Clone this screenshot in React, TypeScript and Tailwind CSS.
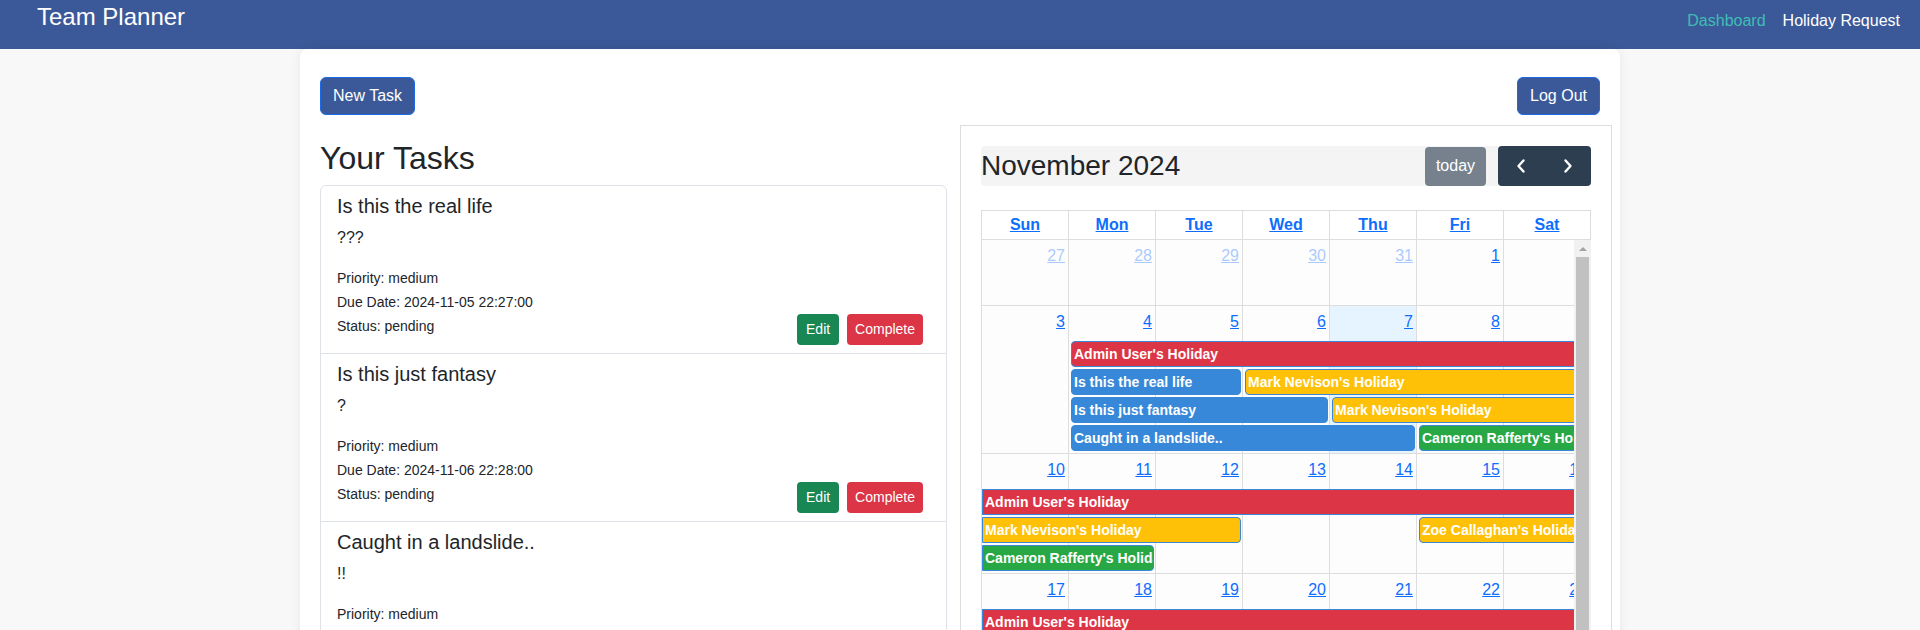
import React from 'react'

type Ev = {
    title: string
    color: 'red' | 'blue' | 'yellow' | 'green'
    col: number
    span: number
    row: number
    starts: boolean
    ends: boolean
}

type Week = {
    days: number[]
    other: number[]
    today?: number
    rows: string
    events: Ev[]
}

const colStart: Record<number, string> = {
    1: 'col-start-1',
    2: 'col-start-2',
    3: 'col-start-3',
    4: 'col-start-4',
    5: 'col-start-5',
    6: 'col-start-6',
    7: 'col-start-7',
}

const colSpan: Record<number, string> = {
    1: 'col-span-1',
    2: 'col-span-2',
    3: 'col-span-3',
    4: 'col-span-4',
    5: 'col-span-5',
    6: 'col-span-6',
    7: 'col-span-7',
}

const rowStart: Record<number, string> = {
    2: 'row-start-2',
    3: 'row-start-3',
    4: 'row-start-4',
    5: 'row-start-5',
}

const evColor = {
    red: 'bg-[#dc3545]',
    blue: 'bg-[#3788d8]',
    yellow: 'bg-[#ffc107]',
    green: 'bg-[#28a745]',
}

const weeks: Week[] = [
    { days: [27, 28, 29, 30, 31, 1, 2], other: [0, 1, 2, 3, 4], rows: 'grid-rows-[66px]', events: [] },
    {
        days: [3, 4, 5, 6, 7, 8, 9],
        other: [],
        today: 4,
        rows: 'grid-rows-[35px_28px_28px_28px_28px_1px]',
        events: [
            { title: "Admin User's Holiday", color: 'red', col: 2, span: 6, row: 2, starts: true, ends: false },
            { title: 'Is this the real life', color: 'blue', col: 2, span: 2, row: 3, starts: true, ends: true },
            { title: "Mark Nevison's Holiday", color: 'yellow', col: 4, span: 4, row: 3, starts: true, ends: false },
            { title: 'Is this just fantasy', color: 'blue', col: 2, span: 3, row: 4, starts: true, ends: true },
            { title: "Mark Nevison's Holiday", color: 'yellow', col: 5, span: 3, row: 4, starts: true, ends: false },
            { title: 'Caught in a landslide..', color: 'blue', col: 2, span: 4, row: 5, starts: true, ends: true },
            { title: "Cameron Rafferty's Holiday", color: 'green', col: 6, span: 2, row: 5, starts: true, ends: false },
        ],
    },
    {
        days: [10, 11, 12, 13, 14, 15, 16],
        other: [],
        rows: 'grid-rows-[35px_28px_28px_28px_1px]',
        events: [
            { title: "Admin User's Holiday", color: 'red', col: 1, span: 7, row: 2, starts: false, ends: false },
            { title: "Mark Nevison's Holiday", color: 'yellow', col: 1, span: 3, row: 3, starts: false, ends: true },
            { title: "Zoe Callaghan's Holiday", color: 'yellow', col: 6, span: 2, row: 3, starts: true, ends: false },
            { title: "Cameron Rafferty's Holiday", color: 'green', col: 1, span: 2, row: 4, starts: false, ends: true },
        ],
    },
    {
        days: [17, 18, 19, 20, 21, 22, 23],
        other: [],
        rows: 'grid-rows-[35px_28px_28px_1px]',
        events: [
            { title: "Admin User's Holiday", color: 'red', col: 1, span: 7, row: 2, starts: false, ends: false },
            { title: "Zoe Callaghan's Holiday", color: 'yellow', col: 1, span: 2, row: 3, starts: false, ends: true },
        ],
    },
    { days: [24, 25, 26, 27, 28, 29, 30], other: [], rows: 'grid-rows-[66px]', events: [] },
]

const tasks = [
    { title: 'Is this the real life', desc: '???', due: '2024-11-05 22:27:00' },
    { title: 'Is this just fantasy', desc: '?', due: '2024-11-06 22:28:00' },
    { title: 'Caught in a landslide..', desc: '!!', due: '2024-11-07 22:29:00' },
]

function TaskItem({ task, last }: { task: (typeof tasks)[number]; last: boolean }) {
    return (
        <div className={`px-[16px] py-[8px] ${last ? '' : 'border-b border-[#dee2e6]'}`}>
            <h5 className="text-[20px] leading-[24px] mb-2">{task.title}</h5>
            <p className="text-base leading-6 mb-4">{task.desc}</p>
            <div className="flex justify-between items-end">
                <div className="pb-[7px] text-[14px] leading-6">
                    <div>Priority: medium</div>
                    <div>Due Date: {task.due}</div>
                    <div>Status: pending</div>
                </div>
                <div className="flex gap-[8px] mr-[7px]">
                    <button className="h-[31px] w-[42px] text-[14px] text-white bg-[#198754] rounded-[4px]">Edit</button>
                    <button className="h-[31px] px-[8px] text-[14px] text-white bg-[#dc3545] rounded-[4px]">Complete</button>
                </div>
            </div>
        </div>
    )
}

function Chevron({ dir }: { dir: 'left' | 'right' }) {
    return (
        <svg width="10" height="16" viewBox="0 0 10 16" fill="none" stroke="white" strokeWidth="2.4" strokeLinecap="round" strokeLinejoin="round">
            {dir === 'left' ? <path d="M7.5 2.5 L2.5 8 L7.5 13.5" /> : <path d="M2.5 2.5 L7.5 8 L2.5 13.5" />}
        </svg>
    )
}

function WeekRow({ week }: { week: Week }) {
    return (
        <div className={`grid grid-cols-7 ${week.rows}`}>
            {week.days.map((d, i) => (
                <div
                    key={i}
                    className={`${colStart[i + 1]} row-span-full border-r border-b border-[#ddd] ${week.today === i ? 'bg-[#e6f4ff]' : 'bg-[#fdfdfd]'}`}
                >
                    <div className={`text-right pr-[3px] pt-[4px] leading-6 ${week.other.includes(i) ? 'opacity-[0.35]' : ''}`}>
                        <a className="text-[#0d6efd] underline">{d}</a>
                    </div>
                </div>
            ))}
            {week.events.map((ev, i) => (
                <div
                    key={'e' + i}
                    className={`${colStart[ev.col]} ${colSpan[ev.span]} ${rowStart[ev.row]} self-start h-[26px] border border-[#3788d8] ${evColor[ev.color]} ${
                        ev.starts ? 'ml-[2px] rounded-l-[4px]' : ''
                    } ${ev.ends ? 'mr-[2px] rounded-r-[4px]' : ''} overflow-hidden whitespace-nowrap px-[2px] text-[14px] font-bold text-white leading-[24px]`}
                >
                    {ev.title}
                </div>
            ))}
        </div>
    )
}

export default function App() {
    return (
        <div className="min-h-screen bg-[#f8f8f8] text-[#212529] font-['Liberation_Sans',Arial,sans-serif]">
            {/* Navbar */}
            <nav className="h-[49px] bg-[#3b5998] flex justify-between items-start">
                <div className="ml-[37px] pt-[3px] text-[24px] leading-[28px] text-white">Team Planner</div>
                <div className="flex gap-[17px] mr-[20px] pt-[9px] text-base leading-6">
                    <a className="text-[#3fbdb3]">Dashboard</a>
                    <a className="text-white">Holiday Request</a>
                </div>
            </nav>

            {/* Main card */}
            <div className="mx-auto w-[1320px] min-h-[700px] bg-white rounded-t-lg shadow-[0_0_12px_rgba(0,0,0,0.07)] px-[20px] pt-[28px]">
                <div className="flex justify-between">
                    <button className="h-[38px] px-[12px] text-base text-white bg-[#3b5998] border border-[#1d6ae5] rounded-[6px]">
                        New Task
                    </button>
                    <button className="h-[38px] px-[12px] text-base text-white bg-[#3b5998] border border-[#1d6ae5] rounded-[6px]">
                        Log Out
                    </button>
                </div>

                <div className="mt-[10px] flex items-start">
                    {/* Tasks */}
                    <div className="w-[627px] shrink-0 pt-[14px]">
                        <h2 className="text-[32px] leading-[38px] mb-2">Your Tasks</h2>
                        <div className="border border-[#dee2e6] rounded-[6px]">
                            {tasks.map((t, i) => (
                                <TaskItem key={i} task={t} last={i === tasks.length - 1} />
                            ))}
                        </div>
                    </div>

                    {/* Calendar */}
                    <div className="ml-[13px] w-[652px] shrink-0 border border-[#ddd] p-[20px] bg-white">
                        <div className="h-[40px] flex items-center justify-between bg-[#f4f4f4] rounded-[4px]">
                            <h2 className="text-[28px] leading-[40px]">November 2024</h2>
                            <div className="flex items-center">
                                <button className="h-[39px] w-[61px] text-base text-white bg-[#76818d] rounded-[4px]">today</button>
                                <div className="ml-[12px] flex h-[40px] bg-[#2c3e50] rounded-[4px]">
                                    <button className="w-[46px] flex items-center justify-center">
                                        <Chevron dir="left" />
                                    </button>
                                    <button className="w-[47px] flex items-center justify-center">
                                        <Chevron dir="right" />
                                    </button>
                                </div>
                            </div>
                        </div>

                        <div className="mt-[24px] w-[610px]">
                            <div className="grid grid-cols-7 border-l border-t border-[#ddd]">
                                {['Sun', 'Mon', 'Tue', 'Wed', 'Thu', 'Fri', 'Sat'].map((d) => (
                                    <div key={d} className="h-[29px] border-r border-b border-[#ddd] text-center leading-[28px] font-bold">
                                        <a className="text-[#0d6efd] underline">{d}</a>
                                    </div>
                                ))}
                            </div>
                            <div className="flex">
                                <div className="w-[593px] overflow-hidden">
                                    <div className="w-[610px] border-l border-[#ddd]">
                                        {weeks.map((w, i) => (
                                            <WeekRow key={i} week={w} />
                                        ))}
                                    </div>
                                </div>
                                <div className="w-[17px] bg-[#f1f1f1] flex flex-col items-center">
                                    <div className="h-[17px] flex items-center justify-center">
                                        <div className="w-0 h-0 border-l-[4px] border-r-[4px] border-b-[4px] border-l-transparent border-r-transparent border-b-[#a3a3a3]" />
                                    </div>
                                    <div className="w-[13px] flex-1 bg-[#c1c1c1]" />
                                </div>
                            </div>
                        </div>
                    </div>
                </div>
            </div>
        </div>
    )
}
